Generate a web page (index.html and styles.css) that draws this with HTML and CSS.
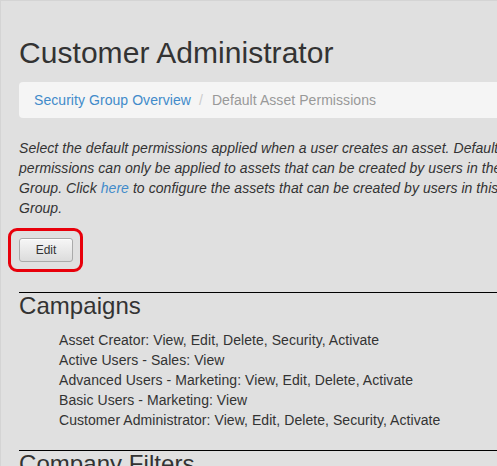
FILE: index.html
```html
<!DOCTYPE html>
<html lang="en">
<head>
<meta charset="utf-8">
<title>Customer Administrator</title>
<link rel="stylesheet" href="styles.css">
</head>
<body>
<div class="page">
  <h1 class="title">Customer Administrator</h1>
  <ol class="breadcrumb">
    <li><a href="#">Security Group Overview</a></li>
    <li class="active">Default Asset Permissions</li>
  </ol>
  <p class="intro">Select the default permissions applied when a user creates an asset. Default permissions can only be applied to assets that can be created by users in the Security Group. Click <a href="#">here</a> to configure the assets that can be created by users in this Security Group.</p>
  <div class="actions">
    <span class="highlight"><button class="btn" type="button">Edit</button></span>
  </div>
  <section class="asset-type">
    <h2>Campaigns</h2>
    <ul class="perm-list">
      <li>Asset Creator: View, Edit, Delete, Security, Activate</li>
      <li>Active Users - Sales: View</li>
      <li>Advanced Users - Marketing: View, Edit, Delete, Activate</li>
      <li>Basic Users - Marketing: View</li>
      <li>Customer Administrator: View, Edit, Delete, Security, Activate</li>
    </ul>
  </section>
  <section class="asset-type">
    <h2>Company Filters</h2>
    <ul class="perm-list">
      <li>Asset Creator: View, Edit, Delete, Security</li>
    </ul>
  </section>
</div>
</body>
</html>
```

FILE: styles.css
```css
html {
  overflow: hidden;
  background: #e0e0e0;
}

body {
  margin: 0;
  min-height: 466px;
  border-top: 1px solid #d4d4d4;
  border-left: 1px solid #d4d4d4;
  font-family: "Liberation Sans", Arial, sans-serif;
  font-size: 14px;
  line-height: 20px;
  letter-spacing: 0.06px;
  color: #333;
}

a {
  color: #428bca;
  text-decoration: none;
}

.page {
  width: 552px;
  padding: 35px 0 0 18px;
}

.title {
  margin: 0 0 13px;
  font-size: 30px;
  font-weight: normal;
  line-height: 33px;
  letter-spacing: 0.05px;
  color: #333;
}

.breadcrumb {
  display: flex;
  margin: 0 0 20px;
  padding: 8px 15px;
  height: 20px;
  list-style: none;
  background: #f5f5f5;
  border-radius: 4px;
  width: 600px;
}

.breadcrumb li + li::before {
  content: "/";
  padding: 0 9px 0 8px;
  color: #ccc;
}

.breadcrumb .active {
  color: #999;
}

.intro {
  margin: 0;
  font-style: italic;
}

.actions {
  margin: 20px 0 30px;
  height: 24px;
}

.highlight {
  display: inline-block;
  margin: -10px 0 0 -11px;
  padding: 7px 7px 7px 8px;
  border: 3px solid #e8000b;
  border-radius: 9px;
}

.btn {
  display: block;
  width: 54px;
  height: 24px;
  margin: 0;
  padding: 0;
  font-family: "Liberation Sans", Arial, sans-serif;
  font-size: 12px;
  color: #333;
  background: linear-gradient(#f6f6f6, #dcdcdc);
  border: 1px solid #aaa;
  border-radius: 3px;
  box-shadow: inset 0 1px 0 #fff;
}

.asset-type {
  border-top: 1px solid #000;
  width: 600px;
}

.asset-type h2 {
  margin: 0;
  font-size: 24px;
  font-weight: normal;
  line-height: 26px;
}

.perm-list {
  margin: 11px 0 20px;
  padding: 0 0 0 40px;
  list-style: none;
}
```
